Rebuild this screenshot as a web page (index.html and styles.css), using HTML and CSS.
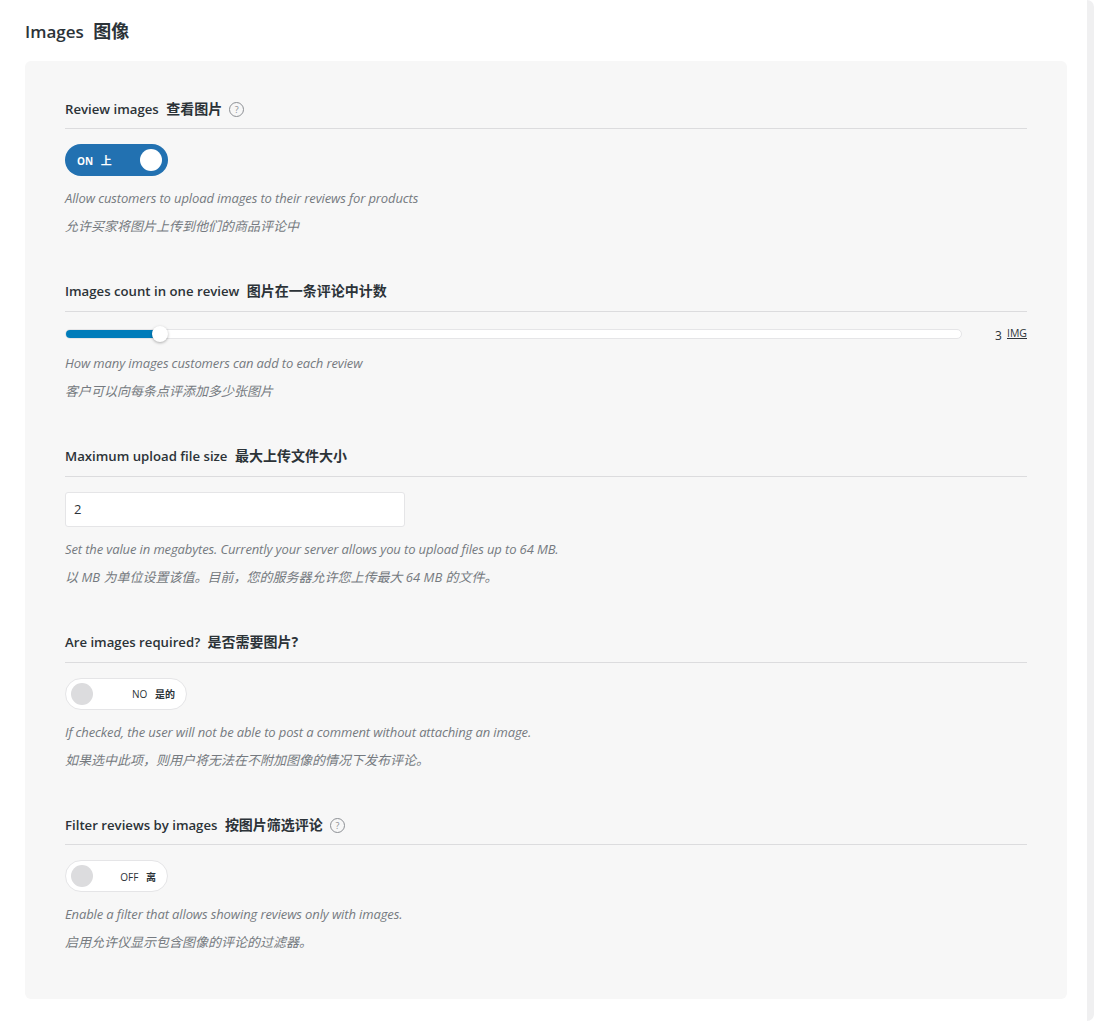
FILE: index.html
```html
<!DOCTYPE html>
<html lang="en">
<head>
  <meta charset="UTF-8">
  <meta name="viewport" content="width=device-width, initial-scale=1.0">
  <title>Images</title>
  <link rel="stylesheet" href="styles.css">
</head>
<body>
  <div class="scroll-edge"></div>
  <div class="wrap">
    <h2 class="page-title">Images <span class="zh">图像</span></h2>

    <div class="panel">
      <div class="setting">
        <div class="setting-label">Review images <span class="zh">查看图片</span> <span class="help">?</span></div>
        <div class="toggle toggle-on">
          <span class="toggle-text">ON <span class="zh">上</span></span>
          <span class="knob"></span>
        </div>
        <p class="desc">Allow customers to upload images to their reviews for products</p>
        <p class="desc desc-zh">允许买家将图片上传到他们的商品评论中</p>
      </div>

      <div class="setting">
        <div class="setting-label">Images count in one review <span class="zh">图片在一条评论中计数</span></div>
        <div class="slider-row">
          <div class="slider">
            <div class="slider-fill" style="width: 95px"></div>
            <span class="slider-thumb"></span>
          </div>
          <div class="slider-value">3 <span class="unit">IMG</span></div>
        </div>
        <p class="desc">How many images customers can add to each review</p>
        <p class="desc desc-zh">客户可以向每条点评添加多少张图片</p>
      </div>

      <div class="setting">
        <div class="setting-label">Maximum upload file size <span class="zh">最大上传文件大小</span></div>
        <input class="text-input" type="text" value="2">
        <p class="desc">Set the value in megabytes. Currently your server allows you to upload files up to 64 MB.</p>
        <p class="desc desc-zh">以 MB 为单位设置该值。目前，您的服务器允许您上传最大 64 MB 的文件。</p>
      </div>

      <div class="setting">
        <div class="setting-label">Are images required? <span class="zh">是否需要图片?</span></div>
        <div class="toggle toggle-no">
          <span class="knob"></span>
          <span class="toggle-text">NO <span class="zh">是的</span></span>
        </div>
        <p class="desc">If checked, the user will not be able to post a comment without attaching an image.</p>
        <p class="desc desc-zh">如果选中此项，则用户将无法在不附加图像的情况下发布评论。</p>
      </div>

      <div class="setting">
        <div class="setting-label">Filter reviews by images <span class="zh">按图片筛选评论</span> <span class="help">?</span></div>
        <div class="toggle toggle-off">
          <span class="knob"></span>
          <span class="toggle-text">OFF <span class="zh">离</span></span>
        </div>
        <p class="desc">Enable a filter that allows showing reviews only with images.</p>
        <p class="desc desc-zh">启用允许仪显示包含图像的评论的过滤器。</p>
      </div>
    </div>
  </div>
</body>
</html>
```

FILE: styles.css
```css
* {
  box-sizing: border-box;
}

body {
  margin: 0;
  height: 1022px;
  overflow: hidden;
  background-color: #fff;
  color: #2c3338;
  font-family: "Open Sans", "Noto Sans CJK SC", sans-serif;
  font-size: 13px;
}

.scroll-edge {
  position: absolute;
  top: 0;
  right: 0;
  width: 7px;
  height: 1021px;
  background-color: #f0f0f1;
  border-radius: 0 8px 8px 0;
}

.wrap {
  width: 1042px;
  margin-left: 25px;
}

.page-title {
  margin: 0;
  height: 61px;
  padding-top: 19px;
  font-size: 17px;
  line-height: 24px;
  font-weight: 600;
}

.page-title .zh {
  margin-left: 5px;
  font-size: 18px;
}

.zh {
  font-weight: 700;
}

.panel {
  height: 938px;
  padding: 38px 40px 0;
  background-color: #f7f7f7;
  border-radius: 6px;
}

.setting {
  margin-bottom: 41.85px;
}

.setting-label {
  display: flex;
  align-items: center;
  height: 30px;
  padding-bottom: 10px;
  border-bottom: 1px solid #dcdcde;
  font-size: 13.2px;
  line-height: 20px;
  font-weight: 600;
  white-space: pre;
}

.setting-label .zh {
  margin-left: 4px;
  font-size: 14px;
}

.help {
  width: 15px;
  height: 15px;
  margin: 1px 0 0 7px;
  border: 1px solid #8c8f94;
  border-radius: 50%;
  color: #8c8f94;
  font-size: 9px;
  line-height: 13px;
  text-align: center;
  font-weight: 400;
}

.toggle {
  display: flex;
  align-items: center;
  justify-content: space-between;
  height: 32px;
  margin-top: 15px;
  padding: 0 5px;
  border-radius: 16px;
  font-size: 10px;
  white-space: pre;
}

.toggle .zh {
  margin-left: 5px;
  font-size: 10px;
  font-weight: 600;
}

.toggle-on {
  width: 103px;
  padding-left: 12px;
  background-color: #2271b1;
  color: #fff;
  font-weight: 700;
}

.toggle-on .zh {
  font-size: 11px;
}

.toggle-no,
.toggle-off {
  background-color: #fff;
  border: 1px solid #e5e5e7;
  padding-right: 11px;
}

.toggle-no {
  width: 122px;
}

.toggle-off {
  width: 103px;
}

.knob {
  width: 22px;
  height: 22px;
  border-radius: 50%;
  background-color: #dcdcde;
}

.toggle-on .knob {
  background-color: #fff;
  margin-right: 1px;
}

.desc {
  margin: 0;
  color: #757a80;
  font-size: 13px;
  line-height: 28px;
  font-style: italic;
  letter-spacing: -0.12px;
}

.desc-zh {
  letter-spacing: 0;
}

.toggle + .desc,
.text-input + .desc {
  margin-top: 8px;
}

.slider-row {
  display: flex;
  align-items: center;
  justify-content: space-between;
  height: 20px;
  margin-top: 12px;
  margin-bottom: 5px;
}

.slider {
  position: relative;
  width: 897px;
  height: 10px;
  background-color: #fff;
  border: 1px solid #e5e5e7;
  border-radius: 5px;
}

.slider-fill {
  height: 8px;
  background-color: #007cba;
  border-radius: 4px 0 0 4px;
}

.slider-thumb {
  position: absolute;
  top: -4px;
  left: 86px;
  width: 16px;
  height: 16px;
  background-color: #fff;
  border-radius: 50%;
  box-shadow: 0 1px 3px rgba(0, 0, 0, 0.3);
}

.slider-value {
  padding-top: 4px;
  font-size: 12px;
  line-height: 20px;
}

.unit {
  position: relative;
  top: -3px;
  margin-left: 2px;
  font-size: 10.5px;
  text-decoration: underline;
}

.text-input {
  display: block;
  width: 340px;
  height: 35px;
  margin-top: 15px;
  padding: 0 8px;
  background-color: #fff;
  border: 1px solid #e5e5e7;
  border-radius: 3px;
  color: #2c3338;
  font-family: inherit;
  font-size: 13px;
}
```
